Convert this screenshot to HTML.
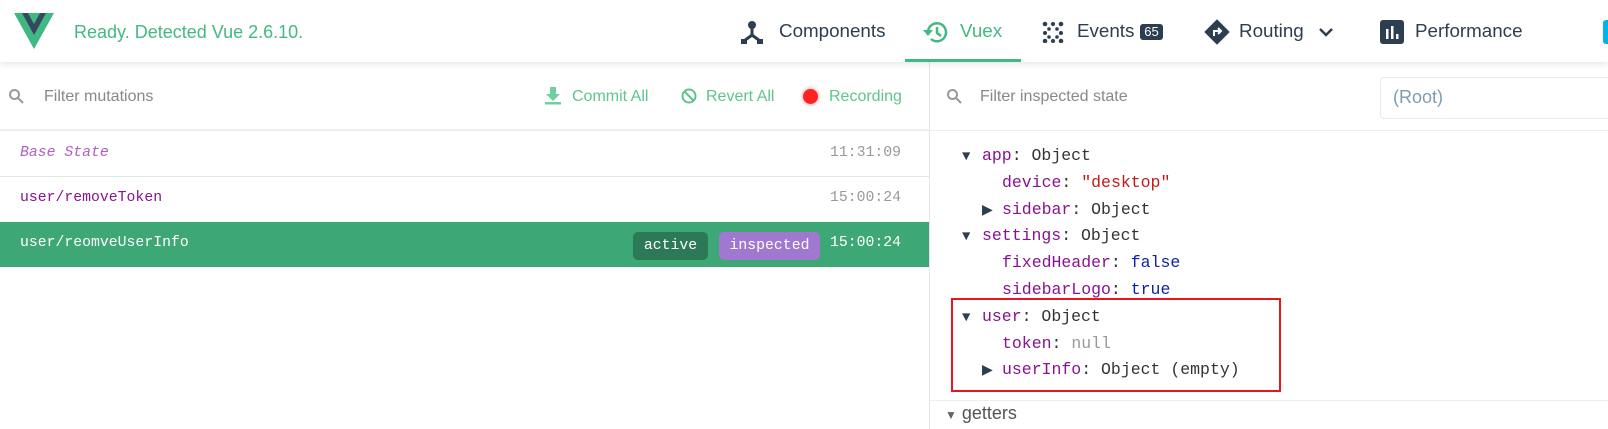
<!DOCTYPE html>
<html><head><meta charset="utf-8"><style>
*{margin:0;padding:0;box-sizing:border-box}
body{width:1608px;height:429px;overflow:hidden;background:#fff;font-family:"Liberation Sans",sans-serif;position:relative}
.a{position:absolute;white-space:nowrap}
.hdr{position:absolute;left:0;top:0;width:1608px;height:62px;background:#fff;box-shadow:0 2px 6px rgba(0,0,0,.1);z-index:2}
.nav{font-size:18.8px;color:#2c3e50;top:20px}
.mono{font-family:"Liberation Mono",monospace}
.tree{font-family:"Liberation Mono",monospace;font-size:16.5px;color:#333}
.k{color:#881391}
.tri{color:#2c3e50;font-size:14px;display:inline-block;width:20px}
</style></head><body>
<div class="hdr">
<svg class="a" style="left:14px;top:13px" width="40" height="36" viewBox="0 0 40 36"><polygon points="0,0 40,0 20,36" fill="#41b883"/><polygon points="8,0 32,0 20,22" fill="#34495e"/><polygon points="14,0 26,0 20,11" fill="#41b883"/></svg>
<div class="a" style="left:74px;top:22px;font-size:18px;color:#42b983">Ready. Detected Vue 2.6.10.</div>
<svg class="a" style="left:741px;top:20px" width="22" height="24" viewBox="0 0 22 24"><circle cx="11" cy="5" r="4" fill="#2c3e50"/><path d="M11 8v7M11 15L3 21M11 15l8 6" stroke="#2c3e50" stroke-width="3" fill="none"/><rect x="0" y="19" width="6" height="5" fill="#2c3e50"/><rect x="16" y="19" width="6" height="5" fill="#2c3e50"/></svg>
<div class="a nav" style="left:779px">Components</div>
<svg class="a" style="left:922px;top:20px" width="26" height="24" viewBox="0 0 26 24"><path d="M6 12a9 9 0 1 1 3 7" stroke="#42b983" stroke-width="2.5" fill="none"/><path d="M1 10l5 6 5-6z" fill="#42b983"/><path d="M15 7v6l4 3" stroke="#42b983" stroke-width="2.5" fill="none"/></svg>
<div class="a nav" style="left:960px;color:#42b983">Vuex</div>
<div class="a" style="left:905px;top:59px;width:116px;height:3px;background:#42b983"></div>
<svg class="a" style="left:1042px;top:21px" width="22" height="22" viewBox="0 0 22 22" fill="#2c3e50"><circle cx="3" cy="3" r="2.3"/><circle cx="11" cy="3" r="2"/><circle cx="19" cy="3" r="2.3"/><circle cx="7" cy="8" r="1.8"/><circle cx="15" cy="8" r="1.8"/><circle cx="3" cy="12" r="2"/><circle cx="19" cy="12" r="2"/><circle cx="7" cy="16" r="1.8"/><circle cx="15" cy="16" r="1.8"/><circle cx="3" cy="20" r="2.3"/><circle cx="11" cy="20" r="2"/><circle cx="19" cy="20" r="2.3"/></svg>
<div class="a nav" style="left:1077px">Events</div>
<div class="a" style="left:1140px;top:24px;width:23px;height:16px;background:#2c3e50;border-radius:3px;color:#fff;font-size:13px;text-align:center;line-height:16px">65</div>
<svg class="a" style="left:1203px;top:18px" width="28" height="28" viewBox="0 0 28 28"><rect x="5" y="5" width="18" height="18" transform="rotate(45 14 14)" fill="#2c3e50"/><path d="M11 18v-5h6M15 10l3 3-3 3" stroke="#fff" stroke-width="2" fill="none"/></svg>
<div class="a nav" style="left:1239px">Routing</div>
<svg class="a" style="left:1318px;top:26px" width="16" height="12" viewBox="0 0 16 12"><path d="M2 3l6 6 6-6" stroke="#2c3e50" stroke-width="2.5" fill="none"/></svg>
<svg class="a" style="left:1380px;top:20px" width="24" height="24" viewBox="0 0 24 24"><rect width="24" height="24" rx="3" fill="#2c3e50"/><rect x="6" y="9" width="2.5" height="10" fill="#fff"/><rect x="11" y="6" width="2.5" height="13" fill="#fff"/><rect x="16" y="14" width="2.5" height="5" fill="#fff"/></svg>
<div class="a nav" style="left:1415px">Performance</div>
<div class="a" style="left:1603px;top:20px;width:8px;height:24px;background:#00b4e6;border-radius:3px"></div>
</div>

<svg class="a" style="left:8px;top:88px" width="16" height="16" viewBox="0 0 16 16"><circle cx="6.5" cy="6.5" r="4.5" stroke="#999" stroke-width="2" fill="none"/><path d="M10 10l5 5" stroke="#999" stroke-width="2"/></svg>
<div class="a" style="left:44px;top:88px;font-size:16px;color:#888">Filter mutations</div>
<svg class="a" style="left:545px;top:87px" width="16" height="18" viewBox="0 0 16 18"><path d="M5 0h6v7h4l-7 7-7-7h4z" fill="#6fcf9f"/><rect y="15" width="16" height="2.5" fill="#6fcf9f"/></svg>
<div class="a" style="left:572px;top:88px;font-size:16px;color:#5fc48f">Commit All</div>
<svg class="a" style="left:681px;top:88px" width="16" height="16" viewBox="0 0 16 16"><circle cx="8" cy="8" r="6.5" stroke="#5fc48f" stroke-width="2" fill="none"/><path d="M3.5 3.5l9 9" stroke="#5fc48f" stroke-width="2"/></svg>
<div class="a" style="left:706px;top:88px;font-size:16px;color:#5fc48f">Revert All</div>
<div class="a" style="left:803px;top:89px;width:15px;height:15px;border-radius:50%;background:#f22;box-shadow:0 0 4px rgba(255,0,0,.5)"></div>
<div class="a" style="left:829px;top:88px;font-size:16px;color:#5fc48f">Recording</div>
<div class="a" style="left:0;top:129px;width:929px;height:2px;background:#eee"></div>
<div class="a mono" style="left:20px;top:145px;font-size:14.8px;color:#b15fc2;font-style:italic">Base State</div>
<div class="a mono" style="left:830px;top:145px;font-size:14.8px;color:#999">11:31:09</div>
<div class="a" style="left:0;top:176px;width:929px;height:1px;background:#e6e6e6"></div>
<div class="a mono" style="left:20px;top:190px;font-size:14.8px;color:#881391">user/removeToken</div>
<div class="a mono" style="left:830px;top:190px;font-size:14.8px;color:#999">15:00:24</div>
<div class="a" style="left:0;top:222px;width:929px;height:45px;background:#3ea776"></div>
<div class="a mono" style="left:20px;top:235px;font-size:14.8px;color:#fff">user/reomveUserInfo</div>
<div class="a mono" style="left:633px;top:232px;width:75px;height:28px;background:#2b7a55;border-radius:5px;color:#fff;font-size:14.8px;text-align:center;line-height:28px">active</div>
<div class="a mono" style="left:719px;top:232px;width:101px;height:28px;background:#a178d0;border-radius:5px;color:#fff;font-size:14.8px;text-align:center;line-height:28px">inspected</div>
<div class="a mono" style="left:830px;top:235px;font-size:14.8px;color:#fff">15:00:24</div>
<div class="a" style="left:929px;top:62px;width:1px;height:367px;background:#e6e6e6"></div>

<svg class="a" style="left:946px;top:88px" width="16" height="16" viewBox="0 0 16 16"><circle cx="6.5" cy="6.5" r="4.5" stroke="#999" stroke-width="2" fill="none"/><path d="M10 10l5 5" stroke="#999" stroke-width="2"/></svg>
<div class="a" style="left:980px;top:88px;font-size:16px;color:#888">Filter inspected state</div>
<div class="a" style="left:1380px;top:77px;width:240px;height:42px;border:1px solid #e0eeee;border-radius:4px"></div>
<div class="a" style="left:1393px;top:87px;font-size:18px;color:#7f9db0">(Root)</div>
<div class="a" style="left:930px;top:130px;width:678px;height:1px;background:#eee"></div>
<div class="tree">
<div class="a" style="left:962px;top:146px"><span class="tri">▼</span><span class="k">app</span>: Object</div>
<div class="a" style="left:1002px;top:173px"><span class="k">device</span>: <span style="color:#c41a16">"desktop"</span></div>
<div class="a" style="left:982px;top:200px"><span class="tri">▶</span><span class="k">sidebar</span>: Object</div>
<div class="a" style="left:962px;top:226px"><span class="tri">▼</span><span class="k">settings</span>: Object</div>
<div class="a" style="left:1002px;top:253px"><span class="k">fixedHeader</span>: <span style="color:#0d22aa">false</span></div>
<div class="a" style="left:1002px;top:280px"><span class="k">sidebarLogo</span>: <span style="color:#0d22aa">true</span></div>
<div class="a" style="left:962px;top:307px"><span class="tri">▼</span><span class="k">user</span>: Object</div>
<div class="a" style="left:1002px;top:334px"><span class="k">token</span>: <span style="color:#999">null</span></div>
<div class="a" style="left:982px;top:360px"><span class="tri">▶</span><span class="k">userInfo</span>: Object (empty)</div>
</div>
<div class="a" style="left:951px;top:298px;width:330px;height:94px;border:2.5px solid #e8141f"></div>
<div class="a" style="left:930px;top:400px;width:678px;height:1px;background:#eee"></div>
<div class="a" style="left:945px;top:403px;font-size:18px;color:#555"><span style="font-size:12px;color:#666">▼</span> getters</div>
</body></html>
